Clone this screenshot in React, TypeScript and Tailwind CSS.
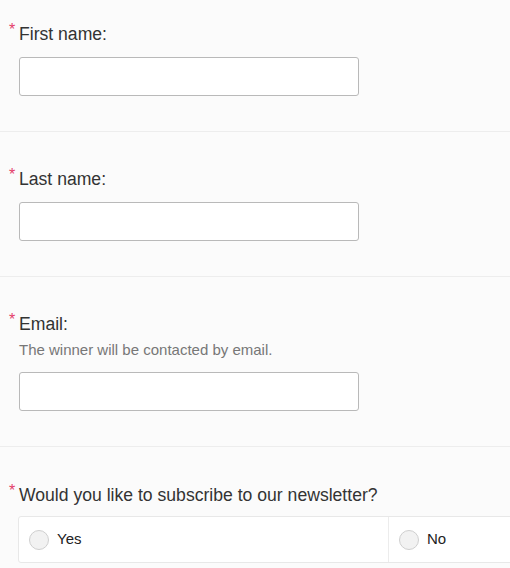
import React from "react";

function Label({ text }: { text: string }) {
  return (
    <div className="relative text-[17.6px] leading-[20px] text-[#333333]">
      <span className="absolute -left-[10px] -top-[4px] text-[16px] text-[#e4406a]">*</span>
      {text}
    </div>
  );
}

function TextInput() {
  return <div className="mt-[13px] h-[39px] w-[340px] rounded-[3px] border border-[#b9b9b9] bg-white" />;
}

function Radio({ label }: { label: string }) {
  return (
    <div className="flex items-center gap-[8px] pl-[10px]">
      <span className="h-[20px] w-[20px] rounded-full border border-[#cfcfcf] bg-[#f2f2f2]" />
      <span className="text-[15px] text-[#222222]">{label}</span>
    </div>
  );
}

export default function App() {
  return (
    <div
      className="h-[568px] w-[510px] overflow-hidden bg-[#fbfbfb]"
      style={{ fontFamily: '"Liberation Sans", Arial, sans-serif' }}
    >
      <div className="border-b border-[#ededed] pl-[19px] pt-[24px] pb-[35px]">
        <Label text="First name:" />
        <TextInput />
      </div>
      <div className="border-b border-[#ededed] pl-[19px] pt-[37px] pb-[35px]">
        <Label text="Last name:" />
        <TextInput />
      </div>
      <div className="border-b border-[#ededed] pl-[19px] pt-[37px] pb-[35px]">
        <Label text="Email:" />
        <div className="mt-[7px] text-[15px] leading-[18px] text-[#777777]">
          The winner will be contacted by email.
        </div>
        <TextInput />
      </div>
      <div className="pl-[18px] pt-[38px]">
        <div className="pl-[1px]">
          <Label text="Would you like to subscribe to our newsletter?" />
        </div>
        <div className="mt-[11px] grid h-[47px] w-[742px] grid-cols-2 rounded-[3px] border border-[#e8e8e8] bg-white">
          <div className="flex items-center border-r border-[#ececec]">
            <Radio label="Yes" />
          </div>
          <div className="flex items-center">
            <Radio label="No" />
          </div>
        </div>
      </div>
    </div>
  );
}
